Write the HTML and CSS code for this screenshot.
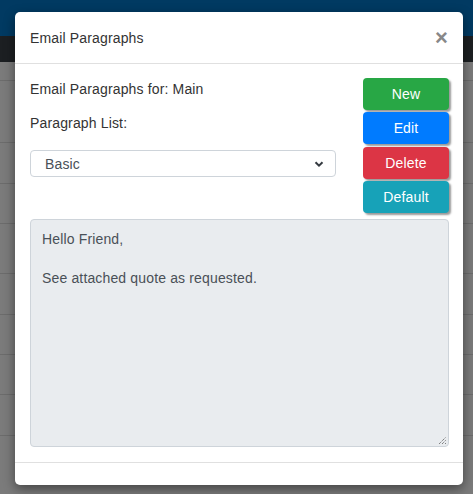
FILE: index.html
```html
<!DOCTYPE html>
<html lang="en">
<head>
  <meta charset="UTF-8">
  <meta name="viewport" content="width=device-width, initial-scale=1.0">
  <title>Email Paragraphs</title>
  <link rel="stylesheet" href="styles.css">
</head>

<body>

  <div class="topbar"></div>
  <div class="navbar"></div>
  <div class="rows">
    <div class="row r1"></div>
    <div class="row r2"></div>
    <div class="row r3"></div>
    <div class="row r4"></div>
    <div class="row r5"></div>
    <div class="row r6"></div>
    <div class="row r7"></div>
    <div class="row r8"></div>
    <div class="row r9"></div>
  </div>

  <div class="modal">
    <div class="modal-header">
      <h5 class="modal-title">Email Paragraphs</h5>
      <span class="close">&times;</span>
    </div>

    <div class="modal-body">
      <div class="top">
        <div class="fields">
          <p class="label">Email Paragraphs for: Main</p>
          <p class="label list-label">Paragraph List:</p>
          <div class="select">
            <span>Basic</span>
            <svg width="10" height="8" viewBox="0 0 10 8"><path d="M1.5 2.2 L5 5.6 L8.5 2.2" fill="none" stroke="#343a40" stroke-width="2"/></svg>
          </div>
        </div>
        <div class="buttons">
          <button class="btn green">New</button>
          <button class="btn blue">Edit</button>
          <button class="btn red">Delete</button>
          <button class="btn teal">Default</button>
        </div>
      </div>
      <div class="textarea">Hello Friend,<br><br>See attached quote as requested.<svg class="grip" width="9" height="9" viewBox="0 0 9 9"><path d="M1 8 L8 1 M4 8 L8 4 M7 8 L8 7" stroke="#555" stroke-width="1" stroke-dasharray="1 1"/></svg></div>
    </div>

    <div class="modal-footer"></div>
  </div>

</body>
</html>
```

FILE: styles.css
```css
body {
  margin: 0;
  font-family: "Liberation Sans", Arial, sans-serif;
  font-size: 14px;
  letter-spacing: .15px;
  background-color: #7b7b7b;
  height: 494px;
  overflow: hidden;
}

.topbar {
  height: 36px;
  background-color: #013a62;
}

.navbar {
  height: 26px;
  background-color: #1c1f22;
}

.rows {
  padding-top: 18px;
}

.row {
  border-top: 1px solid #6c6c6c;
}

.r1 { height: 61px; }
.r2 { height: 40px; }
.r3 { height: 39px; }
.r4 { height: 49px; }
.r5 { height: 40px; }
.r6 { height: 39px; }
.r7 { height: 39px; }
.r8 { height: 40px; }
.r9 { height: 40px; }

.modal {
  position: absolute;
  left: 15px;
  top: 12px;
  width: 448px;
  height: 473px;
  background-color: #fff;
  border-radius: 5px;
  box-shadow: 0 4px 12px rgba(0, 0, 0, .45);
  display: flex;
  flex-direction: column;
  color: #333;
}

.modal-header {
  height: 51px;
  padding: 0 15px;
  border-bottom: 1px solid #e0e0e0;
  display: flex;
  align-items: center;
  justify-content: space-between;
}

.modal-title {
  margin: 0;
  font-size: 14px;
  font-weight: normal;
  color: #333;
}

.close {
  font-size: 22px;
  font-weight: bold;
  color: #888;
  line-height: 1;
}

.modal-body {
  padding: 14px 14px 15px 15px;
  flex: 1;
  display: flex;
  flex-direction: column;
}

.top {
  display: flex;
  justify-content: space-between;
}

.fields {
  width: 306px;
}

.label {
  margin: 0 0 14px 0;
  line-height: 18px;
  padding-top: 2px;
}

.list-label {
  margin-bottom: 18px;
}

.select {
  box-sizing: border-box;
  height: 27px;
  border: 1px solid #ced4da;
  border-radius: 4px;
  padding: 0 11px 0 14px;
  display: flex;
  align-items: center;
  justify-content: space-between;
  color: #495057;
}

.buttons {
  width: 86px;
  display: flex;
  flex-direction: column;
  gap: 2.3px;
}

.btn {
  height: 32px;
  border: none;
  border-radius: 4px;
  color: #fff;
  font-family: "Liberation Sans", Arial, sans-serif;
  font-size: 14px;
  letter-spacing: .15px;
  box-shadow: 2px 2px 2px #999;
}

.green { background-color: #28a745; }
.blue { background-color: #007bff; }
.red { background-color: #dc3545; }
.teal { background-color: #17a2b8; }

.textarea {
  position: relative;
  margin-top: 6px;
  flex: 1;
  background-color: #e9ecef;
  border: 1px solid #ced4da;
  border-radius: 4px;
  padding: 10px 11px;
  line-height: 19.5px;
  color: #495057;
}

.grip {
  position: absolute;
  right: 1px;
  bottom: 1px;
}

.modal-footer {
  height: 22px;
  border-top: 1px solid #e0e0e0;
}
```
